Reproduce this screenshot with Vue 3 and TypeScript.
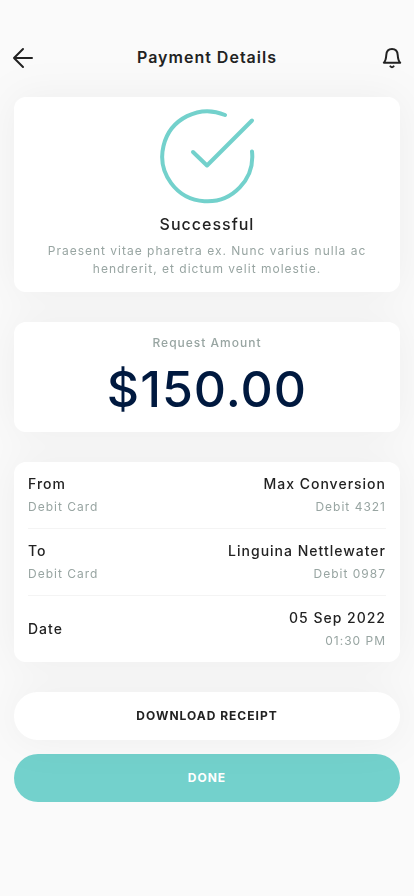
<script setup lang="ts">
interface DetailRow {
  label: string
  labelNote?: string
  value: string
  valueNote: string
}

const rows: DetailRow[] = [
  { label: 'From', labelNote: 'Debit Card', value: 'Max Conversion', valueNote: 'Debit 4321' },
  { label: 'To', labelNote: 'Debit Card', value: 'Linguina Nettlewater', valueNote: 'Debit 0987' },
  { label: 'Date', value: '05 Sep 2022', valueNote: '01:30 PM' },
]
</script>

<template>
  <div class="page">
    <header class="top-bar">
      <button class="icon-button" type="button" aria-label="Back">
        <svg width="22" height="22" viewBox="0 0 22 22" fill="none" stroke="currentColor" stroke-width="2" stroke-linecap="round" stroke-linejoin="round">
          <path d="M20 11H2M11 2L2 11L11 20" />
        </svg>
      </button>
      <h1 class="title">Payment Details</h1>
      <button class="icon-button" type="button" aria-label="Notifications">
        <svg width="22" height="22" viewBox="0 0 22 22" fill="none" stroke="currentColor" stroke-width="2" stroke-linecap="round" stroke-linejoin="round">
          <path d="M3.800 15.700H20.200C18.500 14.200 18 12.500 17.700 8C17.500 4 15.500 2 12 2C8.500 2 6.500 4 6.300 8C6 12.500 5.500 14.200 3.800 15.700Z" />
          <path d="M10.400 19.400Q12 21 13.600 19.400" />
        </svg>
      </button>
    </header>

    <main class="content">
      <div class="raised">
        <section class="card status">
          <svg class="check" width="96" height="96" viewBox="0 0 96 96" fill="none" stroke="currentColor" stroke-width="4" stroke-linecap="round" stroke-linejoin="round">
            <path d="M93 43.500A45 45 0 1 1 66 7" />
            <path d="M34 44L48 57.500L93 12.500" />
          </svg>
          <h2 class="status-title">Successful</h2>
          <p class="note">Praesent vitae pharetra ex. Nunc varius nulla ac hendrerit, et dictum velit molestie.</p>
        </section>

        <section class="card amount">
          <h2 class="amount-label">Request Amount</h2>
          <p class="amount-value">$150.00</p>
        </section>

        <dl class="card details">
          <div v-for="row in rows" :key="row.label" class="row">
            <dt class="cell">
              <span class="strong">{{ row.label }}</span>
              <span v-if="row.labelNote" class="muted">{{ row.labelNote }}</span>
            </dt>
            <dd class="cell end">
              <span class="strong">{{ row.value }}</span>
              <span class="muted">{{ row.valueNote }}</span>
            </dd>
          </div>
        </dl>

        <button class="action" type="button">DOWNLOAD RECEIPT</button>
      </div>
      <button class="action primary" type="button">DONE</button>
    </main>
  </div>
</template>

<style>
body {
  background: #fafafa;
}
</style>

<style scoped>
.page {
  box-sizing: border-box;
  min-height: 100vh;
  padding: 36px 0 94px;
  overflow: hidden;
  color: #222;
  background: #fafafa;
  font-family: Inter, 'Liberation Sans', sans-serif;
  letter-spacing: 1px;
}

h1,
h2,
p,
dl,
dd {
  margin: 0;
}

.top-bar {
  display: flex;
  align-items: center;
  justify-content: space-between;
  height: 44px;
  padding: 0 12px;
}

.icon-button {
  display: flex;
  width: 22px;
  padding: 0;
  border: 0;
  color: inherit;
  background: none;
  justify-content: center;
}

.title,
.status-title {
  font-size: 16px;
  line-height: 22px;
}

.title {
  padding-bottom: 2px;
  font-weight: 600;
}

.content {
  display: flex;
  flex-direction: column;
  gap: 14px;
  padding: 17px 14px 0;
}

.raised {
  display: flex;
  flex-direction: column;
  gap: 30px;
  filter: drop-shadow(0 0 20px rgb(0 0 0 / 5%));
}

.card {
  border-radius: 12px;
  background: #fff;
}

.status {
  display: flex;
  flex-direction: column;
  align-items: center;
  padding: 11px 28px 14px;
  text-align: center;
}

.check {
  color: #73d1cc;
}

.status-title {
  margin: 9px 0 7px;
  font-weight: 500;
}

.note {
  color: #98a5a2;
  font-size: 12px;
  line-height: 18px;
}

.amount {
  padding: 12px 14px 6px;
  text-align: center;
}

.amount-label {
  color: #98a5a2;
  font-size: 12px;
  font-weight: 500;
  line-height: 18px;
}

.amount-value {
  color: #00193f;
  font-size: 50px;
  font-weight: 500;
  line-height: 74px;
}

.details {
  padding: 0 14px;
}

.row {
  display: flex;
  align-items: center;
  justify-content: space-between;
  padding: 12px 0;
}

.row + .row {
  border-top: 1px solid #f4f4f4;
}

.cell {
  display: flex;
  flex-direction: column;
  gap: 4px;
}

.end {
  align-items: flex-end;
}

.strong {
  font-size: 14px;
  font-weight: 500;
  line-height: 20px;
}

.muted {
  color: #98a5a2;
  font-size: 12px;
  line-height: 18px;
}

.action {
  height: 48px;
  padding: 0 24px 2px;
  border: 0;
  border-radius: 24px;
  color: #222;
  background: #fff;
  font-family: inherit;
  font-size: 12px;
  font-weight: 700;
  letter-spacing: 1px;
}

.primary {
  color: #fff;
  background: #73d1cc;
}
</style>
